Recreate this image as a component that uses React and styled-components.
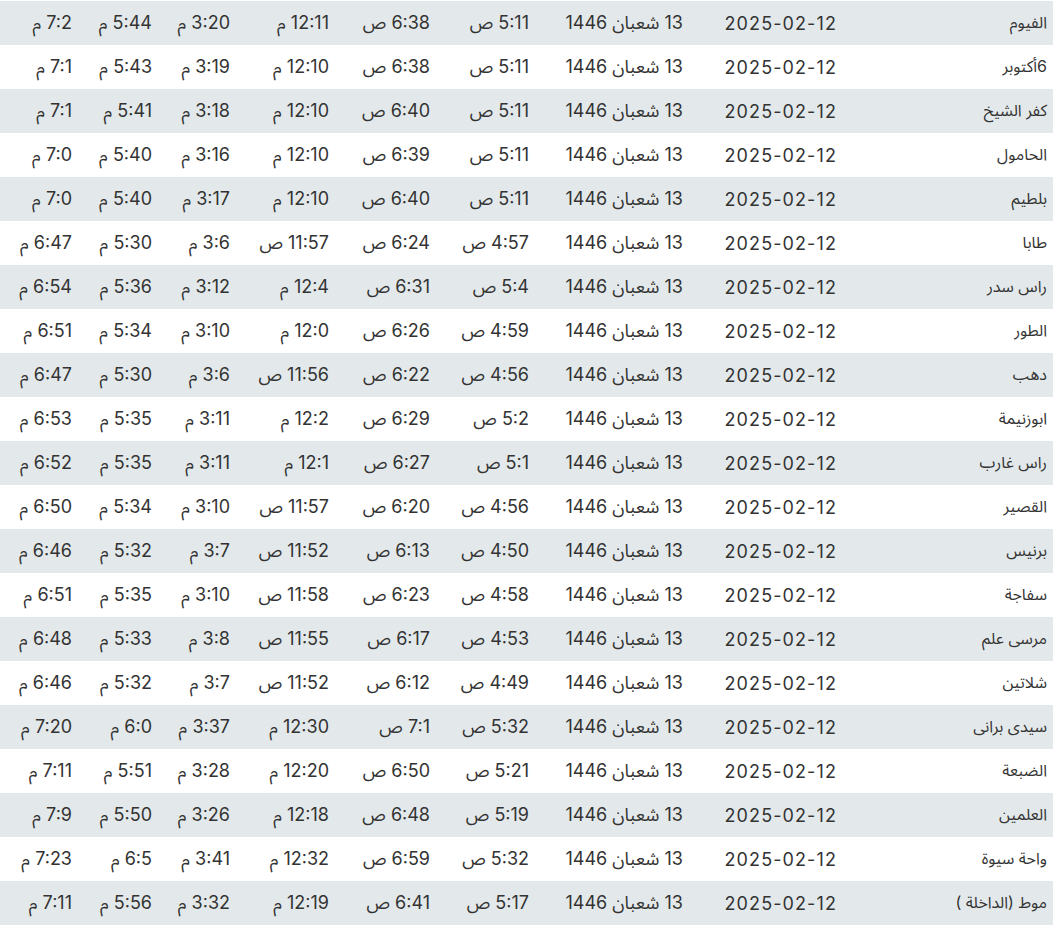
import React from 'react';
import styled, { createGlobalStyle } from 'styled-components';

const GlobalStyle = createGlobalStyle`
  html, body {
    margin: 0;
    padding: 0;
    background: #ffffff;
  }
  body {
    font-family: Inter, "Noto Sans Arabic", "DejaVu Sans", sans-serif;
  }
`;

const TableWrapper = styled.div`
  width: 1053px;
  padding-top: 1px;
  direction: rtl;
`;

const Table = styled.table`
  width: 100%;
  table-layout: fixed;
  border-collapse: collapse;
  border-spacing: 0;
`;

const Row = styled.tr`
  height: 44px;

  &:nth-child(odd) {
    background-color: #e3e9eb;
  }
`;

const Cell = styled.td`
  padding: 0 6px 0 0;
  text-align: right;
  vertical-align: middle;
  font-size: 18px;
  color: #333333;
  white-space: nowrap;
  overflow: hidden;
`;

const NameCell = styled(Cell)`
  font-size: 16px;
`;

const DateCell = styled(Cell)`
  letter-spacing: 1.1px;
`;

const columns = [210, 154, 154, 99, 101, 99, 78, 80, 78];

const rows = [
  ['الفيوم', '5:11 ص', '6:38 ص', '12:11 م', '3:20 م', '5:44 م', '7:2 م'],
  ['6أكتوبر', '5:11 ص', '6:38 ص', '12:10 م', '3:19 م', '5:43 م', '7:1 م'],
  ['كفر الشيخ', '5:11 ص', '6:40 ص', '12:10 م', '3:18 م', '5:41 م', '7:1 م'],
  ['الحامول', '5:11 ص', '6:39 ص', '12:10 م', '3:16 م', '5:40 م', '7:0 م'],
  ['بلطيم', '5:11 ص', '6:40 ص', '12:10 م', '3:17 م', '5:40 م', '7:0 م'],
  ['طابا', '4:57 ص', '6:24 ص', '11:57 ص', '3:6 م', '5:30 م', '6:47 م'],
  ['راس سدر', '5:4 ص', '6:31 ص', '12:4 م', '3:12 م', '5:36 م', '6:54 م'],
  ['الطور', '4:59 ص', '6:26 ص', '12:0 م', '3:10 م', '5:34 م', '6:51 م'],
  ['دهب', '4:56 ص', '6:22 ص', '11:56 ص', '3:6 م', '5:30 م', '6:47 م'],
  ['ابوزنيمة', '5:2 ص', '6:29 ص', '12:2 م', '3:11 م', '5:35 م', '6:53 م'],
  ['راس غارب', '5:1 ص', '6:27 ص', '12:1 م', '3:11 م', '5:35 م', '6:52 م'],
  ['القصير', '4:56 ص', '6:20 ص', '11:57 ص', '3:10 م', '5:34 م', '6:50 م'],
  ['برنيس', '4:50 ص', '6:13 ص', '11:52 ص', '3:7 م', '5:32 م', '6:46 م'],
  ['سفاجة', '4:58 ص', '6:23 ص', '11:58 ص', '3:10 م', '5:35 م', '6:51 م'],
  ['مرسى علم', '4:53 ص', '6:17 ص', '11:55 ص', '3:8 م', '5:33 م', '6:48 م'],
  ['شلاتين', '4:49 ص', '6:12 ص', '11:52 ص', '3:7 م', '5:32 م', '6:46 م'],
  ['سيدى برانى', '5:32 ص', '7:1 ص', '12:30 م', '3:37 م', '6:0 م', '7:20 م'],
  ['الضبعة', '5:21 ص', '6:50 ص', '12:20 م', '3:28 م', '5:51 م', '7:11 م'],
  ['العلمين', '5:19 ص', '6:48 ص', '12:18 م', '3:26 م', '5:50 م', '7:9 م'],
  ['واحة سيوة', '5:32 ص', '6:59 ص', '12:32 م', '3:41 م', '6:5 م', '7:23 م'],
  ['موط (الداخلة )', '5:17 ص', '6:41 ص', '12:19 م', '3:32 م', '5:56 م', '7:11 م'],
];

const App = () => {
  return (
    <>
      <GlobalStyle />
      <TableWrapper>
        <Table>
          <colgroup>
            {columns.map((w, i) => (
              <col key={i} style={{ width: w }} />
            ))}
          </colgroup>
          <tbody>
            {rows.map(([city, ...times]) => (
              <Row key={city}>
                <NameCell>{city}</NameCell>
                <DateCell>2025-02-12</DateCell>
                <Cell>13 شعبان 1446</Cell>
                {times.map((t, i) => (
                  <Cell key={i}>{t}</Cell>
                ))}
              </Row>
            ))}
          </tbody>
        </Table>
      </TableWrapper>
    </>
  );
};

export default App;
